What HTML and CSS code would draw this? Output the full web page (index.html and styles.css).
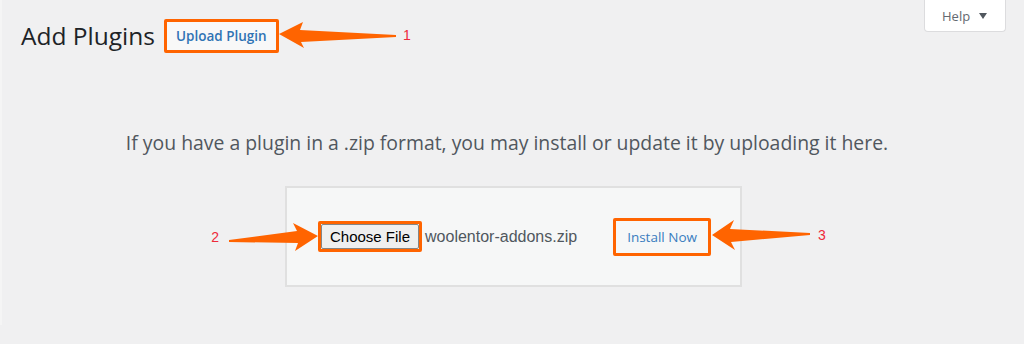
FILE: index.html
```html
<!DOCTYPE html>
<html lang="en">
<head>
    <meta charset="UTF-8">
    <meta name="viewport" content="width=device-width, initial-scale=1.0">
    <title>Add Plugins</title>
    <link rel="stylesheet" href="styles.css">
</head>
<body>
    <div class="page">
        <div class="top">
            <div class="title-row">
                <h1>Add Plugins</h1>
                <span class="mark mark-upload">
                    <a class="title-action" href="#">Upload Plugin</a>
                    <span class="callout callout-1">
                        <svg width="122" height="30" viewBox="0 0 122 30">
                            <polygon points="2,14 26,2 23,10 119,15 119,17 24,22 27,28" fill="#ff6400"/>
                        </svg>
                        <span class="num">1</span>
                    </span>
                </span>
            </div>
            <button class="help-tab" type="button">Help <span class="caret"></span></button>
        </div>

        <p class="install-help">If you have a plugin in a .zip format, you may install or update it by uploading it here.</p>

        <div class="upload-row">
            <form class="upload-form">
                <span class="mark mark-file">
                    <button class="file-btn" type="button">Choose File</button>
                    <span class="callout callout-2">
                        <span class="num">2</span>
                        <svg width="92" height="34" viewBox="0 0 92 34">
                            <polygon points="2,20 70,11 66,3 91,16 68,31 71,23 2,22" fill="#ff6400"/>
                        </svg>
                    </span>
                </span>
                <span class="file-name">woolentor-addons.zip</span>
                <span class="mark mark-install">
                    <button class="install-btn" type="button">Install Now</button>
                    <span class="callout callout-3">
                        <svg width="102" height="34" viewBox="0 0 102 34">
                            <polygon points="2,17 24,2 20,11 100,15 100,17 21,24 25,32" fill="#ff6400"/>
                        </svg>
                        <span class="num">3</span>
                    </span>
                </span>
            </form>
        </div>
    </div>
</body>
</html>
```

FILE: styles.css
```css
body {
    margin: 0;
    background-color: #f0f0f1;
    font-family: "Open Sans", "Noto Sans", sans-serif;
    color: #3c434a;
}
.page {
    min-height: 325px;
    border-left: 2px solid #f5f5f5;
    padding: 0 18px 0 19px;
    box-sizing: border-box;
}
.top {
    display: flex;
    justify-content: space-between;
    align-items: flex-start;
}
.title-row {
    display: flex;
    align-items: center;
    margin-top: 19px;
}
h1 {
    margin: 0 9px 0 0;
    font-size: 24.5px;
    font-weight: 400;
    color: #1d2327;
    line-height: 30px;
}
.mark {
    position: relative;
    display: inline-flex;
    border: 3px solid #ff6400;
    border-radius: 2px;
}
.title-action {
    display: block;
    padding: 0 9px;
    line-height: 28px;
    background-color: #f8f8f8;
    color: #2f73b4;
    font-size: 13.5px;
    font-weight: 600;
    text-decoration: none;
}
.callout {
    position: absolute;
    display: flex;
    align-items: center;
}
.callout svg {
    display: block;
}
.num {
    font-family: "Liberation Sans", Arial, sans-serif;
    font-size: 14px;
    color: #ee2a3a;
}
.callout-1 {
    left: 110px;
    top: -2px;
}
.callout-1 .num {
    margin-left: 4px;
}
.callout-2 {
    right: calc(100% + 2px);
    top: -4px;
}
.callout-2 .num {
    margin-right: 8px;
}
.callout-3 {
    left: calc(100% + 2px);
    top: -3px;
}
.callout-3 .num {
    margin-left: 6px;
}
.help-tab {
    width: 82px;
    height: 32px;
    padding: 0 0 0 17px;
    display: flex;
    align-items: center;
    background-color: #fff;
    border: 1px solid #dcdcde;
    border-top: none;
    border-radius: 0 0 4px 4px;
    font-family: "Open Sans", sans-serif;
    font-size: 13px;
    color: #646970;
}
.caret {
    display: inline-block;
    margin-left: 9px;
    border-left: 4px solid transparent;
    border-right: 4px solid transparent;
    border-top: 6px solid #50575e;
}
.install-help {
    margin: 78px 0 0;
    padding-right: 13px;
    text-align: center;
    font-size: 19.4px;
    line-height: 24px;
    color: #50575e;
}
.upload-row {
    display: flex;
    justify-content: center;
    margin-top: 31px;
}
.upload-form {
    width: 457px;
    height: 101px;
    box-sizing: border-box;
    display: flex;
    align-items: center;
    padding: 0 29px 0 31px;
    background-color: #f6f7f7;
    border: 2px solid #e0e0e0;
}
.file-btn {
    margin: 0;
    height: 25px;
    padding: 0 8px;
    background-color: #efefef;
    border: 1px solid #858585;
    border-radius: 2px;
    font-family: "Liberation Sans", Arial, sans-serif;
    font-size: 15px;
    color: #000;
}
.file-name {
    margin-left: 3px;
    font-family: "Liberation Sans", Arial, sans-serif;
    font-size: 16px;
    color: #50575e;
}
.mark-install {
    margin-left: auto;
}
.install-btn {
    margin: 0;
    height: 32px;
    padding: 0 11px;
    background-color: #f6f7f7;
    border: none;
    font-family: "Open Sans", sans-serif;
    font-size: 13.5px;
    color: #3a7dbf;
}
```
